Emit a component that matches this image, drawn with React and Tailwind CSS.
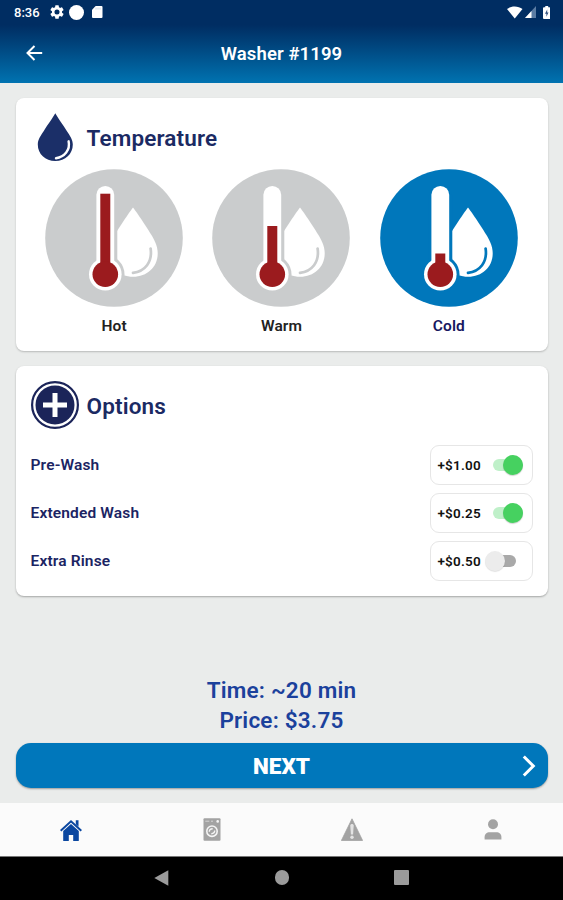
import { useState } from "react";

const TEMPERATURES = [
  { id: "hot", label: "Hot", level: 24.7 },
  { id: "warm", label: "Warm", level: 57 },
  { id: "cold", label: "Cold", level: 84.5 },
];

const OPTIONS = [
  { id: "pre", label: "Pre-Wash", price: "+$1.00" },
  { id: "extended", label: "Extended Wash", price: "+$0.25" },
  { id: "rinse", label: "Extra Rinse", price: "+$0.50" },
];

function StatusBar() {
  return (
    <div className="flex h-6 items-center justify-between pl-[14px] pr-[13px] text-white">
      <div className="flex items-center">
        <span className="w-[35.5px] pt-px text-[13px] font-medium leading-6">8:36</span>
        <svg className="h-[14px] w-[14px]" viewBox="2 2 20 20" fill="currentColor">
          <path d="M19.14 12.94c.04-.3.06-.61.06-.94 0-.32-.02-.64-.07-.94l2.03-1.58a.49.49 0 0 0 .12-.61l-1.92-3.32a.49.49 0 0 0-.59-.22l-2.39.96a7 7 0 0 0-1.62-.94l-.36-2.54a.48.48 0 0 0-.48-.41h-3.84a.47.47 0 0 0-.47.41l-.36 2.54c-.59.24-1.13.57-1.62.94l-2.39-.96a.48.48 0 0 0-.59.22L2.74 8.87a.47.47 0 0 0 .12.61l2.03 1.58c-.05.3-.09.63-.09.94s.02.64.07.94l-2.03 1.58a.49.49 0 0 0-.12.61l1.92 3.32c.12.22.37.29.59.22l2.39-.96c.5.38 1.03.7 1.62.94l.36 2.54c.05.24.24.41.48.41h3.84c.24 0 .44-.17.47-.41l.36-2.54a7 7 0 0 0 1.62-.94l2.39.96c.22.08.47 0 .59-.22l1.92-3.32a.47.47 0 0 0-.12-.61l-2.01-1.58zM12 15.6a3.6 3.6 0 1 1 0-7.2 3.6 3.6 0 0 1 0 7.2z" />
        </svg>
        <div className="ml-[5.5px] h-[15px] w-[15px] rounded-full bg-white" />
        <svg className="ml-[8px] h-[12px] w-[10.5px]" viewBox="0 0 10.5 12">
          <path d="M3.7 0H9.5a1 1 0 0 1 1 1v10a1 1 0 0 1-1 1H1a1 1 0 0 1-1-1V3.7z" fill="#fff" />
          <path d="M4 1.6v2M6 1.6v2M8 1.6v2" stroke="#bccbe0" strokeWidth=".8" />
        </svg>
      </div>
      <div className="flex items-center">
        <svg className="h-[13px] w-[15.5px]" viewBox="0 0 15.5 13">
          <path d="M0 3.1C4.3-.3 11.2-.3 15.5 3.1L7.75 12.6z" fill="#fff" />
        </svg>
        <svg className="ml-[2px] h-[12px] w-[11px]" viewBox="0 0 11 12">
          <path d="M11 0v12H0z" fill="#5b7ca3" />
          <path d="M6.5 4.9V12H0z" fill="#fff" />
        </svg>
        <svg className="ml-[7px] h-[13px] w-[7.5px]" viewBox="0 0 7.5 13">
          <path d="M2.3 0h2.9v1.3h1.3a1 1 0 0 1 1 1V12a1 1 0 0 1-1 1H1a1 1 0 0 1-1-1V2.3a1 1 0 0 1 1-1h1.3z" fill="#fff" />
          <path d="M4.2 3.6 2 7.7h1.4v3L5.5 6.6H4.2z" fill="#33527f" />
        </svg>
      </div>
    </div>
  );
}

function ThermometerIcon({ level, selected }) {
  const bg = selected ? "#0077bb" : "#cacccd";
  return (
    <svg className="h-[138px] w-[138px]" viewBox="0 0 138 138">
      <circle cx="69" cy="69" r="68.8" fill={bg} />
      <path d="M88 38.5C90 41 97 51 103 60.5C109 70 112.7 76 112.7 84.5C112.7 98 102 107.8 88 107.8C74 107.8 63.3 98 63.3 84.5C63.3 76 67 70 73 60.5C79 51 86 41 88 38.5z" fill="#fff" />
      <path d="M105.6 79.5C107.6 93 100 102.5 88 103.8" fill="none" stroke={bg} strokeWidth="2.7" strokeLinecap="round" />
      <path d="M60.3 25.5V105" stroke={bg} strokeWidth="24" />
      <circle cx="60.3" cy="105.3" r="19.2" fill={bg} />
      <path d="M60.3 25.8V105" stroke="#fff" strokeWidth="17.8" strokeLinecap="round" />
      <circle cx="60.3" cy="105.3" r="16.3" fill="#fff" />
      <path d={`M60.3 ${level}V105`} stroke="#9b1b1e" strokeWidth="10" />
      <circle cx="60.3" cy="105.3" r="12.8" fill="#9b1b1e" />
    </svg>
  );
}

function CardTitle({ icon, children }) {
  return (
    <div className="flex h-12 items-center gap-[8px]">
      {icon}
      <h2 className="pt-px text-[22.5px] font-semibold leading-7 tracking-[0.15px] text-[#1b2a63]">{children}</h2>
    </div>
  );
}

function Switch({ on }) {
  if (on) {
    return (
      <span className="flex h-[12px] w-[30px] items-center justify-end rounded-full bg-[#bff0c9]">
        <span className="h-[20px] w-[20px] rounded-full bg-[#46d160] shadow-[0_1px_1px_rgba(0,0,0,0.18)]" />
      </span>
    );
  }
  return (
    <span className="mr-[7px] flex h-[12px] w-[30px] items-center rounded-full bg-[#a9a9a9]">
      <span className="-ml-px h-[20px] w-[20px] shrink-0 rounded-full bg-[#ececec] shadow-[0_1px_1px_rgba(0,0,0,0.12)]" />
    </span>
  );
}

function TabBar() {
  return (
    <nav className="grid h-[53px] grid-cols-4 place-items-center bg-[#fbfbfb] text-[#a3a3a3]">
      <svg className="ml-px h-[22px] w-[22px]" viewBox="0 0 22 22">
        <path d="M.7 11.7 11 2.3l10.3 9.4" fill="none" stroke="#0b47a0" strokeWidth="2" />
        <path d="M15.8 1.2h2.7v6.5l-2.7-2.4zM11 4.9l7.8 7v9.7a.6.6 0 0 1-.6.6H13.2v-6.2H8.8v6.2H3.8a.6.6 0 0 1-.6-.6v-9.7z" fill="#0b47a0" />
      </svg>
      <svg className="ml-px h-[23px] w-[18px]" viewBox="0 0 18 23">
        <rect x=".5" y=".3" width="17" height="22.4" rx="1" fill="#a3a3a3" />
        <path d="M2.3 3.2h4M8 3.2h2" stroke="#d6d6d6" strokeWidth="1" />
        <circle cx="14.7" cy="3.4" r="1.3" fill="#f5f5f5" />
        <circle cx="9" cy="13.2" r="5.2" fill="none" stroke="#f5f5f5" strokeWidth="1.6" />
        <path d="M6.3 13.8c0-2.1 1.3-3.1 3.4-3.1M11.7 12.6c0 2.1-1.3 3.1-3.4 3.1" fill="none" stroke="#f5f5f5" strokeWidth="1.4" />
      </svg>
      <svg className="h-[23px] w-[22px]" viewBox="0 0 22 23">
        <path d="M11 .8 21.6 22.5H.4z" fill="#a3a3a3" stroke="#a3a3a3" strokeWidth=".8" strokeLinejoin="round" />
        <path d="M9.3 7.5c0-2 3.4-2 3.4 0l-.6 9H9.9z" fill="#e3e3e3" />
        <circle cx="11" cy="19.3" r="1.7" fill="#e3e3e3" />
      </svg>
      <svg className="h-[21px] w-[18px]" viewBox="0 0 18 21" fill="currentColor">
        <circle cx="9" cy="5.3" r="5" />
        <path d="M.6 20.5v-2.2c0-3.4 2.2-5 5-5h6.8c2.8 0 5 1.6 5 5v2.2z" />
      </svg>
    </nav>
  );
}

function AndroidNav() {
  return (
    <div className="flex h-[44px] items-center justify-center gap-[105px] border-t border-[#777] bg-black pb-[2px]">
      <svg className="h-[16px] w-[16px]" viewBox="0 0 16 16">
        <path d="M14.3.3v15.4L.3 8z" fill="#9b9b9b" />
      </svg>
      <span className="h-[14.5px] w-[14.5px] rounded-full bg-[#9b9b9b]" />
      <span className="h-[15px] w-[15px] rounded-[1px] bg-[#9b9b9b]" />
    </div>
  );
}

export default function App() {
  const [temperature, setTemperature] = useState("cold");
  const [enabled, setEnabled] = useState({ pre: true, extended: true, rinse: false });

  const toggle = (id) => setEnabled((prev) => ({ ...prev, [id]: !prev[id] }));

  return (
    <div className="flex h-[900px] w-[563px] flex-col overflow-hidden bg-[#eaeceb] font-['Roboto',sans-serif]">
      <header className="h-[83px] shrink-0 bg-linear-to-b from-[#002d62] from-30% to-[#0073b1]">
        <StatusBar />
        <div className="grid h-[59px] grid-cols-[1fr_auto_1fr] items-center text-white">
          <button type="button" aria-label="Back" className="ml-[26px] -mt-[2px] w-4">
            <svg className="h-[16px] w-[17px]" viewBox="0 0 17 16" fill="none" stroke="currentColor" strokeWidth="2">
              <path d="M16.2 8H2M8.5 1 1.5 8l7 7" />
            </svg>
          </button>
          <h1 className="pt-[3px] text-[18.5px] font-semibold tracking-[0.1px]">Washer #1199</h1>
        </div>
      </header>

      <main className="flex flex-1 flex-col px-[15.5px] pt-[15px]">
        <section className="h-[253px] rounded-[8px] bg-white px-[15px] pt-[15px] shadow-[0_1px_2px_rgba(0,0,0,0.22)]">
          <CardTitle
            icon={
              <svg className="h-12 w-12" viewBox="0 0 48 48">
                <path d="M24.3.3C26.8 5 31.8 11.5 35.800 18c3.300 5 6 8.800 6 13.500C41.800 41 34.300 48 24.300 48S6.800 41 6.800 31.500c0-4.700 2.700-8.500 6-13.500C16.800 11.500 21.800 5 24.300.3z" fill="#1b2f68" />
                <path d="M37.600 28.300C39.500 37 33.500 44 25 45.300" fill="none" stroke="#fff" strokeWidth="2.400" strokeLinecap="round" />
              </svg>
            }
          >
            Temperature
          </CardTitle>
          <div className="mt-[8px] grid grid-cols-3">
            {TEMPERATURES.map((t) => (
              <button key={t.id} type="button" onClick={() => setTemperature(t.id)} className="flex flex-col items-center">
                <ThermometerIcon level={t.level} selected={temperature === t.id} />
                <span className={`mt-[9px] text-[15.5px] font-semibold leading-5 tracking-[0.1px] ${temperature === t.id ? "text-[#17175f]" : "text-[#222]"}`}>
                  {t.label}
                </span>
              </button>
            ))}
          </div>
        </section>

        <section className="mt-[15px] h-[230px] rounded-[8px] bg-white px-[15px] pt-[15px] shadow-[0_1px_2px_rgba(0,0,0,0.3)]">
          <CardTitle
            icon={
              <svg className="h-12 w-12" viewBox="0 0 48 48">
                <circle cx="24" cy="24" r="22.9" fill="#fff" stroke="#1b2459" strokeWidth="2.2" />
                <circle cx="24" cy="24" r="19.5" fill="#1b2459" />
                <path d="M24 12v24M12 24h24" stroke="#fff" strokeWidth="5" />
              </svg>
            }
          >
            Options
          </CardTitle>
          <ul className="mt-[16px] flex flex-col gap-2">
            {OPTIONS.map((o) => (
              <li key={o.id} className="flex h-10 items-center justify-between">
                <span className="pt-px text-[15.5px] font-semibold tracking-[0.15px] text-[#1b2463]">{o.label}</span>
                <button
                  type="button"
                  onClick={() => toggle(o.id)}
                  className="flex h-10 w-[103px] items-center justify-between rounded-[9px] border border-[#e6e6e6] pl-[7px] pr-[9px]"
                >
                  <span className="-mr-2 text-[13.5px] font-semibold tracking-[0.2px] text-[#111]">{o.price}</span>
                  <Switch on={enabled[o.id]} />
                </button>
              </li>
            ))}
          </ul>
        </section>

        <div className="mt-auto mb-[8px] text-center text-[22.5px] font-semibold leading-[30px] tracking-[0.2px] text-[#1b419c]">
          <p>Time: ~20 min</p>
          <p>Price: $3.75</p>
        </div>
        <button
          type="button"
          className="mb-[15px] grid h-[45px] grid-cols-[1fr_auto_1fr] items-center rounded-[15px] bg-[#0077bb] text-white shadow-[0_1px_2px_rgba(0,0,0,0.35)]"
        >
          <span className="col-start-2 pt-[2px] text-[22.5px] font-black">NEXT</span>
          <svg className="mr-[12px] h-[22px] w-[14px] justify-self-end" viewBox="0 0 14 22" fill="none" stroke="currentColor" strokeWidth="3">
            <path d="M1.8 1.5 11.3 11l-9.5 9.5" />
          </svg>
        </button>
      </main>

      <TabBar />
      <AndroidNav />
    </div>
  );
}
